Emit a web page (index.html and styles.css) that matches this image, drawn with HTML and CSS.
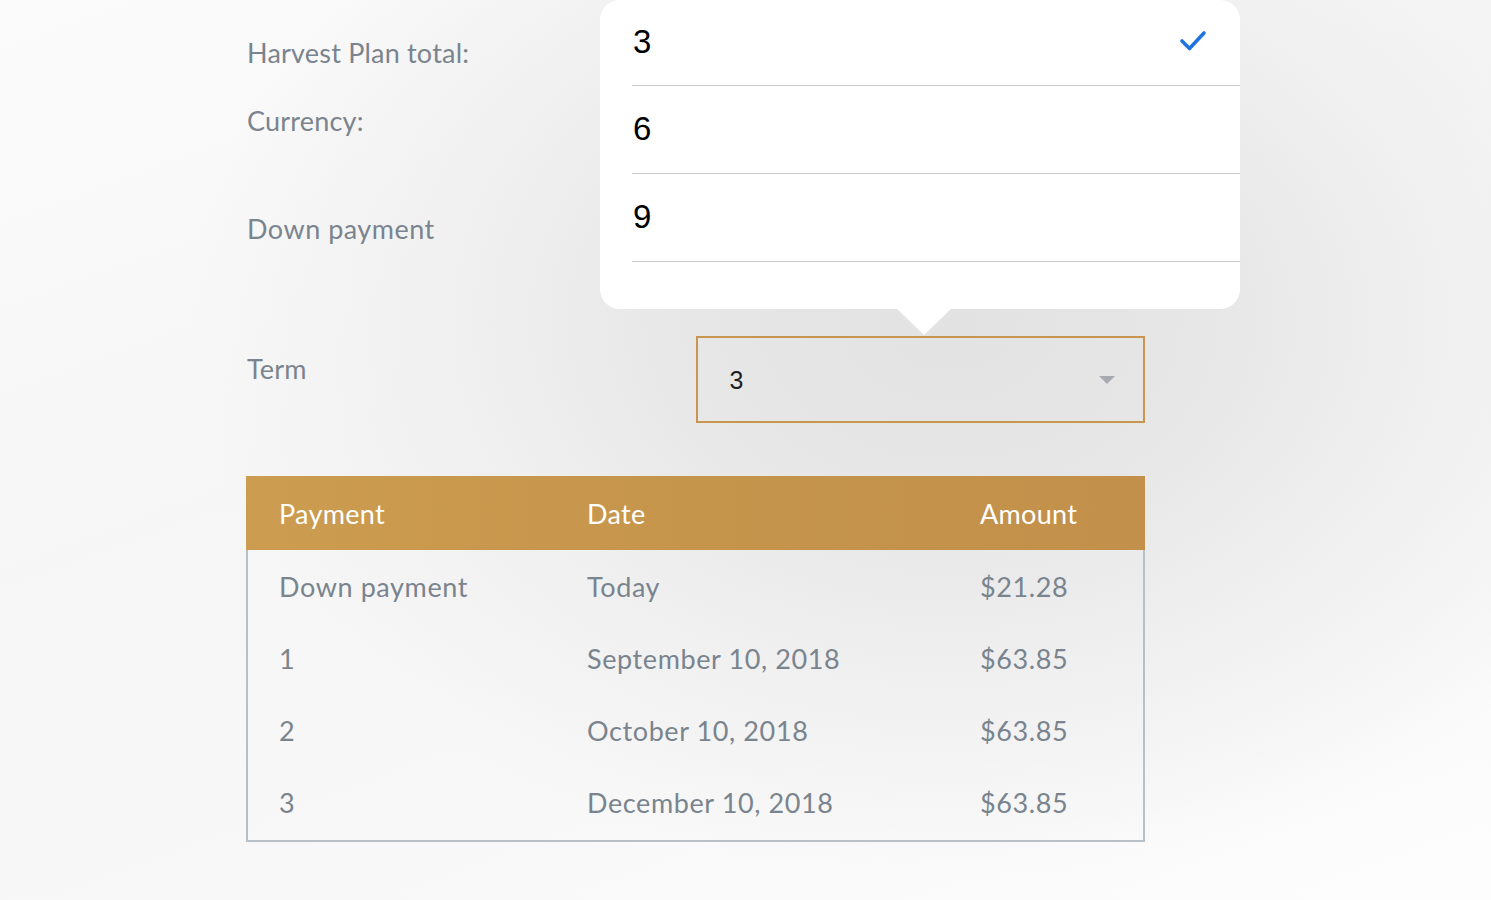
FILE: index.html
```html
<!DOCTYPE html>
<html>
<head>
<meta charset="utf-8">
<link rel="stylesheet" href="styles.css">
</head>
<body>
<div class="page">
  <div class="label l-harvest">Harvest Plan total:</div>
  <div class="label l-currency">Currency:</div>
  <div class="label l-down">Down payment</div>
  <div class="term-row">
    <div class="label l-term">Term</div>
    <div class="select">
      <span class="select-value">3</span>
      <span class="caret"></span>
    </div>
  </div>
  <div class="table">
    <div class="thead">
      <div>Payment</div><div>Date</div><div>Amount</div>
    </div>
    <div class="tbody">
      <div class="tr"><div>Down payment</div><div>Today</div><div>$21.28</div></div>
      <div class="tr"><div>1</div><div>September 10, 2018</div><div>$63.85</div></div>
      <div class="tr"><div>2</div><div>October 10, 2018</div><div>$63.85</div></div>
      <div class="tr"><div>3</div><div>December 10, 2018</div><div>$63.85</div></div>
    </div>
  </div>
</div>
<div class="popover">
  <div class="opt"><span>3</span>
    <svg class="check" width="28" height="24" viewBox="0 0 28 24"><path d="M3 11 L10.5 18.5 L25 3" fill="none" stroke="#1f74e0" stroke-width="3.6" stroke-linecap="round" stroke-linejoin="round"/></svg>
  </div>
  <div class="opt"><span>6</span></div>
  <div class="opt"><span>9</span></div>
  <div class="arrow"></div>
</div>
</body>
</html>
```
FILE: styles.css
```css
html, body {
  margin: 0;
  padding: 0;
  height: 100%;
}
body {
  width: 1491px;
  height: 900px;
  overflow: hidden;
  position: relative;
  font-family: "Lato", "Open Sans", sans-serif;
  background:
    radial-gradient(ellipse 760px 560px at 950px 320px, #e2e2e2 0%, #e7e7e7 35%, #f0f0f0 65%, rgba(251,251,251,0) 100%),
    linear-gradient(160deg, #fbfbfb 0%, #f6f6f6 40%, #f8f8f8 70%, #fdfdfd 100%);
}
.page {
  padding-left: 246px;
  width: 899px;
  padding-top: 36px;
}
.label {
  font-size: 27px;
  line-height: 34px;
  color: #7a848e;
  padding-left: 1px;
  letter-spacing: 0.2px;
}
.l-down { letter-spacing: 0.5px; }
.l-currency { margin-top: 34px; }
.l-down { margin-top: 74px; }
.term-row {
  margin-top: 90px;
  display: flex;
  align-items: flex-start;
}
.l-term {
  margin-top: 16px;
  width: 450px;
}
.select {
  border: 2px solid #c8964f;
  display: flex;
  align-items: center;
  justify-content: space-between;
  padding: 0 28px 0 31px;
  box-sizing: border-box;
  height: 87px;
  width: 449px;
}
.select-value {
  font-family: "Liberation Sans", Arial, sans-serif;
  font-size: 25px;
  color: #1f1f1f;
  padding-top: 1px;
}
.caret {
  width: 0;
  height: 0;
  border-left: 8px solid transparent;
  border-right: 8px solid transparent;
  border-top: 8px solid #a7abb1;
  margin-top: 0px;
}
.table {
  margin-top: 53px;
  width: 899px;
}
.thead {
  height: 74px;
  display: grid;
  grid-template-columns: 308px 393px 1fr;
  align-items: center;
  padding-left: 33px;
  background: linear-gradient(90deg, #cc9c50 0%, #c6954c 50%, #c2904a 100%);
  color: #ffffff;
  font-size: 27px;
  letter-spacing: 0.3px;
}
.tbody {
  border: 2px solid #b8bfc6;
  border-top: none;
  padding-top: 1px;
}
.tr {
  height: 72px;
  display: grid;
  grid-template-columns: 308px 393px 1fr;
  align-items: center;
  padding-left: 31px;
  color: #7a848e;
  font-size: 27px;
  letter-spacing: 0.6px;
}
.tr div { margin-top: -2px; }
.tr:last-child { height: 73px; }
.popover {
  position: absolute;
  left: 600px;
  top: 0;
  width: 640px;
  height: 309px;
  background: #ffffff;
  border-radius: 20px;
  box-sizing: border-box;
  padding-left: 32px;
}
.opt {
  height: 86px;
  border-bottom: 1px solid #c9c9c9;
  display: flex;
  align-items: center;
  justify-content: space-between;
  font-family: "Liberation Sans", Arial, sans-serif;
  font-size: 33px;
  color: #000;
  padding-left: 1px;
  padding-right: 33px;
  box-sizing: border-box;
}
.opt + .opt { height: 88px; }
.opt span { margin-top: -2px; }
.check { margin-top: -1px; }
.arrow {
  position: absolute;
  left: 296px;
  top: 308px;
  width: 0;
  height: 0;
  border-left: 28px solid transparent;
  border-right: 28px solid transparent;
  border-top: 27px solid #ffffff;
}
```
